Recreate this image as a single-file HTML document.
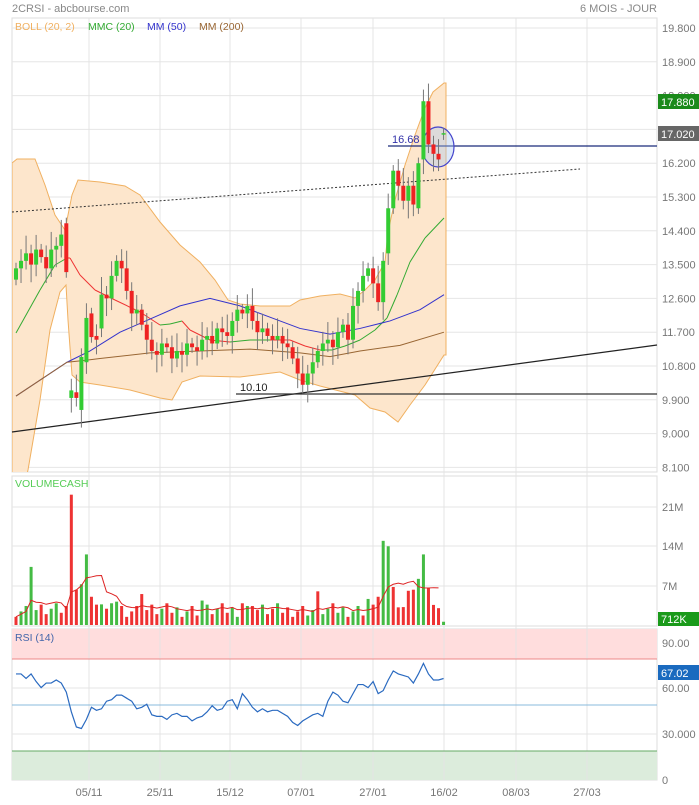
<!DOCTYPE html>
<html><head><meta charset="utf-8">
<style>
html,body{margin:0;padding:0;background:#fff;}
body{width:699px;height:800px;overflow:hidden;font-family:"Liberation Sans",sans-serif;}
svg text{font-family:"Liberation Sans",sans-serif;}
</style></head>
<body>
<svg id="s" width="699" height="800" xmlns="http://www.w3.org/2000/svg">
<defs><clipPath id="cp"><rect x="12" y="18" width="645" height="454"/></clipPath></defs>
<text x="12" y="12" font-size="11" fill="#888">2CRSI - abcbourse.com</text>
<text x="657" y="12" font-size="11" fill="#888" text-anchor="end">6 MOIS - JOUR</text>
<g id="grid"></g>
<g id="band" clip-path="url(#cp)"></g>
<g id="lines"></g>
<g id="candles"></g>
<g id="vol"></g>
<g id="rsi"></g>
<g id="labels" font-size="11" fill="#777"></g>
<text x="15" y="30" font-size="10.5" fill="#f0b060">BOLL (20, 2)</text>
<text x="88" y="30" font-size="10.5" fill="#3a3">MMC (20)</text>
<text x="147" y="30" font-size="10.5" fill="#33c">MM (50)</text>
<text x="199" y="30" font-size="10.5" fill="#963">MM (200)</text>
<text x="15" y="487" font-size="10.5" fill="#5c5">VOLUMECASH</text>
<text x="15" y="641" font-size="10.5" fill="#46a">RSI (14)</text>
</svg>
<script>
var NS="http://www.w3.org/2000/svg";
function el(g,t,a,txt){var e=document.createElementNS(NS,t);for(var k in a)e.setAttribute(k,a[k]);if(txt!==undefined)e.textContent=txt;document.getElementById(g).appendChild(e);return e;}
function py(p){return 28+(19.8-p)/0.9*33.8;}
var L=12,R=657;
var vx=[89,160,230,301,373,444,516,587];
el("grid","rect",{x:L,y:18,width:R-L,height:454,fill:"#fff",stroke:"#ddd"});
el("grid","rect",{x:L,y:476,width:R-L,height:150,fill:"#fff",stroke:"#ddd"});
el("grid","rect",{x:L,y:629,width:R-L,height:151,fill:"#fff",stroke:"#ddd"});
el("grid","rect",{x:L,y:629,width:R-L,height:30,fill:"#fdd"});
el("grid","rect",{x:L,y:751,width:R-L,height:29,fill:"#dcecdc"});
for(var p=19.8;p>8;p-=0.9){var y=py(p);el("grid","line",{x1:L,x2:R,y1:y,y2:y,stroke:"#e6e6e6"});el("labels","text",{x:662,y:y+4},p.toFixed(3));}
[[507,"21M"],[546,"14M"],[586,"7M"]].forEach(function(a){el("grid","line",{x1:L,x2:R,y1:a[0],y2:a[0],stroke:"#e6e6e6"});el("labels","text",{x:662,y:a[0]+4},a[1]);});
[[643,"90.00"],[688,"60.00"],[734,"30.000"],[780,"0"]].forEach(function(a){if(a[1]!="90.00"&&a[1]!="0")el("grid","line",{x1:L,x2:R,y1:a[0],y2:a[0],stroke:"#e6e6e6"});el("labels","text",{x:662,y:a[0]+4},a[1]);});
vx.forEach(function(x){el("grid","line",{x1:x,x2:x,y1:18,y2:780,stroke:"#e4e4e4"});});
el("grid","line",{x1:L,x2:R,y1:659,y2:659,stroke:"#e88"});
el("grid","line",{x1:L,x2:R,y1:751,y2:751,stroke:"#6a6"});
el("grid","line",{x1:L,x2:R,y1:705,y2:705,stroke:"#8bd"});
["05/11","25/11","15/12","07/01","27/01","16/02","08/03","27/03"].forEach(function(t,i){el("labels","text",{x:vx[i],y:796,"text-anchor":"middle"},t);});

var C=[13.4,13.6,13.8,13.5,13.9,13.7,13.4,13.9,14.0,14.3,13.3,
10.15,9.95,11.04,12.08,11.57,11.5,12.7,
12.6,13.2,13.6,13.4,12.8,12.2,12.3,
11.9,11.5,11.2,11.1,11.4,11.3,
11.0,11.2,11.1,11.4,11.3,11.2,11.5,11.6,11.4,11.8,11.7,11.6,12.0,12.3,
12.2,12.4,12.0,11.7,11.8,11.6,11.5,11.6,
11.4,11.3,11.0,10.6,10.3,
10.6,10.9,11.2,11.4,11.5,11.3,11.7,11.9,11.5,
12.4,12.8,13.2,13.4,13.0,12.5,13.6,
15.0,16.0,15.6,15.2,15.6,15.1,
16.2,17.85,16.7,16.45,16.3,17.0];
var O=[13.1];for(var i=1;i<C.length;i++)O.push(C[i-1]);
O[10]=14.6;O[11]=9.95;O[12]=10.1;O[13]=9.63;O[14]=10.9;O[15]=12.2;O[16]=11.6;O[17]=11.8;O[80]=15.0;O[81]=16.3;O[82]=17.85;O[85]=16.97;O[74]=13.8;
function X(i){return 16+i*5.03;}
// band hand-drawn
var UP=[[12,163],[17,159],[35,159],[45,185],[55,215],[65,230],[72,195],[78,180],[100,182],[125,186],[140,195],[160,222],[180,245],[200,262],[215,280],[228,300],[240,304],[260,306],[290,306],[300,300],[320,296],[340,294],[355,298],[365,290],[375,280],[385,262],[388,232],[395,200],[405,165],[415,135],[425,108],[433,92],[444,83],[446,83]];
var LO=[[446,355],[444,355],[425,385],[410,405],[398,422],[385,412],[370,408],[355,395],[320,386],[300,380],[280,372],[240,377],[200,376],[182,382],[172,400],[160,398],[130,390],[100,385],[80,382],[72,375],[68,320],[66,285],[60,292],[50,330],[40,400],[28,470],[20,500],[12,500]];
var d="M"+UP.concat(LO).map(function(a){return a[0]+" "+a[1]}).join(" L")+"Z";
el("band","path",{d:d,fill:"#fde6cc",stroke:"#f0b060","stroke-width":1});
// MMC20 hand
var MG=[[16,333,"g"],[40,290,"g"],[55,265,"g"],[67,258,"g"],[70,258,"r"],[80,275,"r"],[95,290,"r"],[115,300,"r"],[140,312,"r"],[160,325,"r"],[170,324,"g"],[182,321,"g"],[190,330,"r"],[210,340,"r"],[230,342,"r"],[250,340,"g"],[270,340,"g"],[290,340,"r"],[305,346,"r"],[320,350,"r"],[332,350,"g"],[345,346,"g"],[360,340,"g"],[375,330,"g"],[387,318,"g"],[397,295,"g"],[410,262,"g"],[425,238,"g"],[444,218,"g"]];
for(var i=1;i<MG.length;i++)el("lines","line",{x1:MG[i-1][0],y1:MG[i-1][1],x2:MG[i][0],y2:MG[i][1],stroke:MG[i][2]=="g"?"#3a3":"#e33","stroke-width":1});
function pl(pts,col){el("lines","polyline",{points:pts.map(function(a){return a[0]+","+py(a[1])}).join(" "),fill:"none",stroke:col,"stroke-width":1});}
pl([[16,10.0],[67,10.9],[90,11.2],[120,11.7],[150,12.05],[180,12.4],[210,12.6],[240,12.4],[270,12.1],[300,11.8],[330,11.65],[360,11.8],[390,12.0],[420,12.3],[444,12.7]],"#33c");
pl([[16,10.0],[67,10.9],[85,10.95],[100,11.0],[150,11.15],[200,11.2],[250,11.25],[300,11.15],[330,11.05],[360,11.2],[400,11.35],[444,11.7]],"#963");
el("lines","line",{x1:L,y1:432,x2:R,y2:345,stroke:"#222","stroke-width":1.2});
el("lines","line",{x1:L,y1:212,x2:580,y2:169,stroke:"#333","stroke-width":1,"stroke-dasharray":"2,2"});
el("lines","line",{x1:236,y1:394,x2:R,y2:394,stroke:"#333","stroke-width":1.2});
el("labels","text",{x:240,y:391,fill:"#222"},"10.10");
for(var i=0;i<C.length;i++){var x=X(i),o=O[i],c=C[i],h=Math.max(o,c)+0.15+((i*7)%5)*0.08,l=Math.min(o,c)-0.15-((i*3)%5)*0.08;
el("candles","line",{x1:x,x2:x,y1:py(h),y2:py(l),stroke:"#777"});
var t=py(Math.max(o,c)),b=py(Math.min(o,c));if(b-t<1.5){b=t+1.5;}
el("candles","rect",{x:x-2,y:t,width:4,height:b-t,fill:c>=o?"#3c3":"#e22"});}
el("lines","line",{x1:388,y1:146,x2:R,y2:146,stroke:"#1a2a7a","stroke-width":1.2});
el("lines","ellipse",{cx:438,cy:147,rx:16,ry:20,fill:"rgba(170,200,240,0.4)",stroke:"#44c","stroke-width":1.2});
el("labels","text",{x:392,y:143,fill:"#33a"},"16.68");
el("labels","rect",{x:658,y:94,width:41,height:15,fill:"#1a8a1a"});
el("labels","text",{x:661,y:106,fill:"#fff"},"17.880");
el("labels","rect",{x:658,y:126,width:41,height:15,fill:"#666"});
el("labels","text",{x:661,y:138,fill:"#fff"},"17.020");
el("labels","rect",{x:658,y:612,width:41,height:14,fill:"#1a9a1a"});
el("labels","text",{x:661,y:623,fill:"#fff"},"712K");
el("labels","rect",{x:658,y:665,width:41,height:15,fill:"#1a6abf"});
el("labels","text",{x:661,y:677,fill:"#fff"},"67.02");
var V=[];for(var i=0;i<C.length;i++)V.push(1.5+((i*37)%11)/4);
var ov={3:10.7,10:3.5,11:24,12:6.5,13:7.5,14:13,15:5.2,17:3.8,20:4.3,21:3.5,25:5.7,37:4.5,45:4.0,47:3.5,60:6.2,70:4.8,72:5.2,73:15.5,74:14.5,75:7,77:3.3,78:6.3,79:6.5,80:8.5,81:13,82:6.8,83:3.7,84:3.1,85:0.6};
for(var k in ov)V[k]=ov[k];
for(var i=0;i<V.length;i++){var g=(i*13)%3!=0;if(C[i]<O[i])g=false;if([3,14,73,74,81,80,20,13].indexOf(i)>=0)g=true;if(i==11)g=false;
var hgt=V[i]*5.43;el("vol","rect",{x:X(i)-1.5,y:625-hgt,width:3,height:hgt,fill:g?"#4b4":"#e33"});}
var vp="";for(var i=0;i<V.length-1;i++){var s=0,n=0;for(var j=Math.max(0,i-6);j<=i;j++){s+=V[j];n++;}vp+=X(i)+","+(625-s/n*5.43)+" ";}
el("vol","polyline",{points:vp,fill:"none",stroke:"#d22","stroke-width":1});
var RS=[70,70,67,70,65,61,64,64,66,64,58,45,35,34,40,48,46,47,52,53,56,56,54,52,47,48,50,43,42,42,40,43,44,42,42,39,41,42,45,49,46,47,52,53,47,57,53,48,45,47,45,46,46,44,42,38,36,39,41,43,44,42,52,58,56,52,51,57,63,63,61,65,57,59,66,72,70,69,68,64,70,77,70,66,66,67];
el("rsi","polyline",{points:RS.map(function(r,i){return X(i)+","+(780-r*1.515)}).join(" "),fill:"none",stroke:"#2a6ac0","stroke-width":1.2});
</script>
</body></html>
